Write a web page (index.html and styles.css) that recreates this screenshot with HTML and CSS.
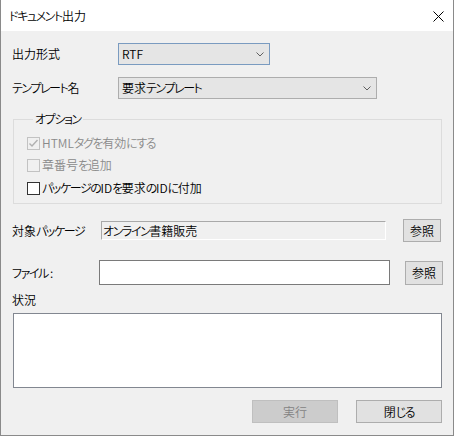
FILE: index.html
```html
<!DOCTYPE html>
<html lang="ja">
<head>
<meta charset="utf-8">
<title>ドキュメント出力</title>
<link rel="stylesheet" href="styles.css">
</head>
<body>
<div class="window">
  <div class="titlebar">
    <span class="title"><span class="kn">ドキュメント</span>出力</span>
    <svg class="close" width="11" height="11" viewBox="0 0 11 11"><path d="M0.5 0.5 L10.5 10.5 M10.5 0.5 L0.5 10.5" stroke="#000" stroke-width="1"/></svg>
  </div>
  <div class="content">
    <div class="row row-combo">
      <span class="lbl lbl-combo">出力形式</span>
      <div class="combo combo-focus combo-format">
        <span class="combo-text">RTF</span>
        <svg class="chev" width="8" height="5" viewBox="0 0 8 5"><polyline points="0.5,0.5 4,4 7.5,0.5" fill="none" stroke="#606060" stroke-width="1"/></svg>
      </div>
    </div>
    <div class="row row-combo">
      <span class="lbl lbl-combo"><span class="kn">テンプレート</span>名</span>
      <div class="combo combo-template">
        <span class="combo-text">要求<span class="kn">テンプレート</span></span>
        <svg class="chev" width="8" height="5" viewBox="0 0 8 5"><polyline points="0.5,0.5 4,4 7.5,0.5" fill="none" stroke="#606060" stroke-width="1"/></svg>
      </div>
    </div>
    <fieldset class="group">
      <legend class="legend"><span class="kn">オプション</span></legend>
      <div class="check check-disabled">
        <span class="box"><svg width="11" height="11" viewBox="0 0 11 11"><polyline points="1.5,5.5 4,8 9.5,2" fill="none" stroke="#b0b0b0" stroke-width="1.4"/></svg></span>
        <span class="check-text">HTML<span class="kn">タグを</span>有効<span class="kn">にする</span></span>
      </div>
      <div class="check check-disabled">
        <span class="box"></span>
        <span class="check-text">章番号<span class="kn">を</span>追加</span>
      </div>
      <div class="check check-last">
        <span class="box"></span>
        <span class="check-text"><span class="kn">パッケージの</span>ID<span class="kn">を</span>要求<span class="kn">の</span>ID<span class="kn">に</span>付加</span>
      </div>
    </fieldset>
    <div class="row row-package">
      <span class="lbl lbl-package">対象<span class="kn">パッケージ</span></span>
      <div class="readonly"><span class="kn">オンライン</span>書籍販売</div>
      <button class="btn btn-browse">参照</button>
    </div>
    <div class="row row-file">
      <span class="lbl lbl-file"><span class="kn">ファイル</span><span class="colon">:</span></span>
      <div class="input"></div>
      <button class="btn btn-browse btn-browse2">参照</button>
    </div>
    <div class="status-label">状況</div>
    <div class="status"></div>
    <div class="actions">
      <button class="btn btn-action" disabled>実行</button>
      <button class="btn btn-action">閉<span class="kn">じる</span></button>
    </div>
  </div>
</div>
</body>
</html>
```

FILE: styles.css
```css
* { box-sizing: border-box; }
html, body { margin: 0; padding: 0; }
body {
  background: #ffffff;
  font-family: "Noto Sans CJK JP", "Noto Sans", sans-serif;
  font-size: 12px;
  font-weight: 350;
  font-feature-settings: "palt";
  color: #000;
}
.kn { letter-spacing: -1.4px; }
.colon { margin-left: 2px; }
.window {
  width: 454px;
  height: 436px;
  background: #f0f0f0;
  border-left: 1px solid #8a8a8a;
  border-right: 1px solid #8a8a8a;
  border-bottom: 1px solid #8a8a8a;
  display: flex;
  flex-direction: column;
}
.titlebar {
  height: 31px;
  background: #ffffff;
  display: flex;
  align-items: center;
  padding-left: 8px;
  padding-right: 9px;
  flex-shrink: 0;
}
.title {
  flex: 1;
  font-size: 12px;
  line-height: 16px;
  margin-top: 1px;
}
.close { display: block; margin-top: 2px; }
.content {
  display: flex;
  flex-direction: column;
  flex: 1;
}
.row {
  display: flex;
  align-items: center;
  padding-left: 11px;
}
.row-combo { height: 22px; margin-top: 12px; }
.lbl { line-height: 16px; white-space: nowrap; }
.lbl-combo { width: 106px; }
.combo {
  height: 22px;
  background: #e5e5e5;
  border: 1px solid #adadad;
  display: flex;
  align-items: center;
  padding-left: 3px;
  padding-right: 5px;
}
.combo-focus { border-color: #7a9bc0; }
.combo-format { width: 152px; }
.combo-template { width: 259px; }
.combo-text { flex: 1; line-height: 16px; }
.chev { display: block; }

.group {
  margin: 12px 0 0 12px;
  width: 429px;
  border: 1px solid #dcdcdc;
  padding: 5px 0 4px 13px;
}
.legend {
  margin-left: 6px;
  padding: 0 2px;
  line-height: 16px;
  font-size: 12px;
}
.check {
  height: 22px;
  display: flex;
  align-items: center;
}
.check-last { margin-top: 1px; }
.box {
  width: 13px;
  height: 13px;
  border: 1px solid #333333;
  background: #ffffff;
  display: flex;
  align-items: center;
  justify-content: center;
  flex-shrink: 0;
}
.check-disabled .box { border-color: #c2c2c2; background: #f0f0f0; }
.check-disabled .check-text { color: #8a8a8a; }
.check-text { margin-left: 2px; line-height: 16px; }

.row-package { height: 23px; margin-top: 15px; align-items: center; }
.lbl-package { width: 89px; }
.readonly {
  width: 285px;
  height: 19px;
  border-style: solid;
  border-width: 1px;
  border-color: #a9a9a9 #ffffff #ffffff #a9a9a9;
  line-height: 17px;
  padding-left: 1px;
}
.btn {
  font-family: inherit;
  font-size: 12px;
  font-weight: 350;
  font-feature-settings: "palt";
  color: #000;
  background: #e1e1e1;
  border: 1px solid #adadad;
  padding: 0;
  margin: 0;
  line-height: 16px;
}
.btn-browse { width: 38px; height: 23px; margin-left: 17px; }
.row-file { height: 25px; margin-top: 18px; }
.lbl-file { width: 87px; }
.input {
  width: 291px;
  height: 25px;
  background: #ffffff;
  border: 1px solid #7a7a7a;
}
.btn-browse2 { margin-left: 15px; height: 24px; margin-top: 1px; }
.status-label {
  margin: 7px 0 0 11px;
  line-height: 16px;
}
.status {
  margin: 5px 0 0 12px;
  width: 429px;
  height: 75px;
  background: #ffffff;
  border: 1px solid #828790;
}
.actions {
  display: flex;
  justify-content: flex-end;
  gap: 18px;
  padding-right: 11px;
  margin-top: 12px;
}
.btn-action { width: 86px; height: 23px; }
.btn-action:disabled {
  background: #cccccc;
  border-color: #bfbfbf;
  color: #838383;
}
```
